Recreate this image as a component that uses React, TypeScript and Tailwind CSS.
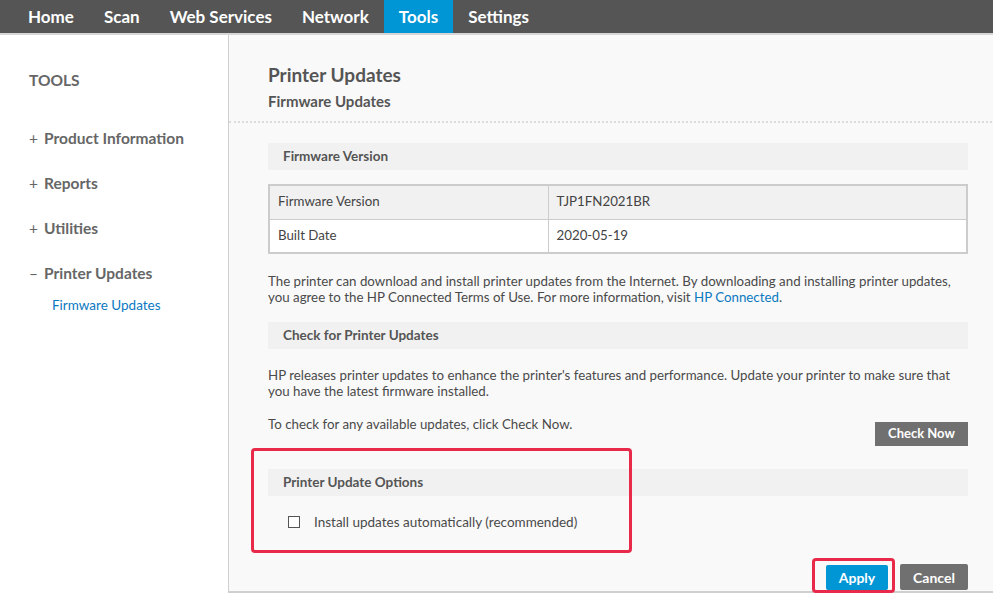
import React from "react";

const navItems = ["Home", "Scan", "Web Services", "Network", "Tools", "Settings"];
const sideItems = [
  { sign: "+", label: "Product Information" },
  { sign: "+", label: "Reports" },
  { sign: "+", label: "Utilities" },
  { sign: "–", label: "Printer Updates" },
];

function SectionHead({ title }: { title: string }) {
  return (
    <div className="h-[27px] bg-[#f1f1f1] pl-[15px] flex items-center text-[13.5px] font-bold text-[#555]">
      {title}
    </div>
  );
}

export default function App() {
  return (
    <div
      className="w-[993px] h-[593px] overflow-hidden bg-white text-[#4a4a4a]"
      style={{ fontFamily: "Lato, 'Liberation Sans', sans-serif" }}
    >
      {/* top nav */}
      <div className="h-[33px] bg-[#555555] flex items-stretch pl-[13px] border-b-[2px] border-[#d6d6d6] box-content">
        {navItems.map((n) => (
          <div
            key={n}
            className={
              n === "Tools"
                ? "px-[15px] flex items-center bg-[#0096d6] text-white text-[17px] font-bold"
                : "px-[15px] flex items-center text-white text-[17px] font-bold"
            }
          >
            {n}
          </div>
        ))}
      </div>

      <div className="flex h-[558px]">
        {/* sidebar */}
        <div className="w-[229px] shrink-0 border-r border-[#cfcfcf] pl-[29px] pt-[33px]">
          <div className="text-[15.5px] leading-[24px] font-bold text-[#666]">TOOLS</div>
          <div className="mt-[34px] flex flex-col gap-[21px]">
            {sideItems.map((s) => (
              <div key={s.label} className="text-[15.5px] leading-[24px] font-bold text-[#666] flex gap-[5px]">
                <span className="font-normal w-[10px]">{s.sign}</span>
                <span>{s.label}</span>
              </div>
            ))}
          </div>
          <div className="mt-[10px] pl-[23px] text-[13.5px] leading-[20px] text-[#0a79c1]">Firmware Updates</div>
        </div>

        {/* main */}
        <div className="flex-1 bg-[#f9f9f9] border-b-2 border-[#cfcfcf] flex flex-col">
          <div className="pl-[39px] pt-[27px] h-[88px] border-b-2 border-dotted border-[#dcdcdc]">
            <div className="text-[19px] font-bold text-[#555] leading-[26px]">Printer Updates</div>
            <div className="text-[15px] font-bold text-[#555] leading-[20px] mt-[3px]">Firmware Updates</div>
          </div>

          <div className="pl-[39px] pr-[28px] pt-[20px] flex flex-col">
            <SectionHead title="Firmware Version" />

            <table className="mt-[14px] w-[700px] border-2 border-[#cccccc] text-[13.3px] text-[#444] border-collapse">
              <tbody>
                <tr className="bg-[#f1f1f1] h-[34px] border-b border-[#cccccc]">
                  <td className="pl-[8px] w-[279px] border-r border-[#cccccc]">Firmware Version</td>
                  <td className="pl-[8px]">TJP1FN2021BR</td>
                </tr>
                <tr className="bg-white h-[34px]">
                  <td className="pl-[8px] border-r border-[#cccccc]">Built Date</td>
                  <td className="pl-[8px]">2020-05-19</td>
                </tr>
              </tbody>
            </table>

            <p className="mt-[19px] text-[13.3px] leading-[16px]">
              The printer can download and install printer updates from the Internet. By downloading and installing printer updates, you agree to the HP Connected Terms of Use. For more information, visit{" "}
              <span className="text-[#0a79c1]">HP Connected</span>.
            </p>

            <div className="mt-[17px]">
              <SectionHead title="Check for Printer Updates" />
            </div>

            <p className="mt-[18px] text-[13.3px] leading-[16px]">
              HP releases printer updates to enhance the printer's features and performance. Update your printer to make sure that you have the latest firmware installed.
            </p>

            <div className="mt-[17px] flex justify-between items-start">
              <span className="text-[13.3px] leading-[16px]">To check for any available updates, click Check Now.</span>
              <button className="mt-[6px] h-[24px] w-[93px] bg-[#707070] text-white text-[13px] font-bold">Check Now</button>
            </div>
          </div>

          {/* options */}
          <div className="relative pl-[39px] pr-[28px] mt-[23px]">
            <div className="absolute left-[22px] top-[-21px] w-[381px] h-[105px] border-[3px] border-[#e8294a] rounded-[4px]" />
            <SectionHead title="Printer Update Options" />
            <label className="mt-[16px] pl-[20px] flex items-center gap-[14px] text-[13.5px] leading-[20px]">
              <span className="w-[12px] h-[12px] border border-[#555] bg-white" />
              <span>Install updates automatically (recommended)</span>
            </label>
          </div>

          <div className="pr-[28px] mt-[32px] flex justify-end items-start gap-[12px]">
            <div className="relative mt-[1px]">
              <div className="absolute left-[-14px] top-[-7px] w-[83px] h-[35px] border-[3px] border-[#e8294a] rounded-[4px]" />
              <button className="h-[25px] w-[62px] bg-[#0096d6] text-white text-[14px] font-bold rounded-[2px]">Apply</button>
            </div>
            <button className="h-[26px] w-[68px] bg-[#707070] text-white text-[14px] font-bold rounded-[2px]">Cancel</button>
          </div>
        </div>
      </div>
    </div>
  );
}
